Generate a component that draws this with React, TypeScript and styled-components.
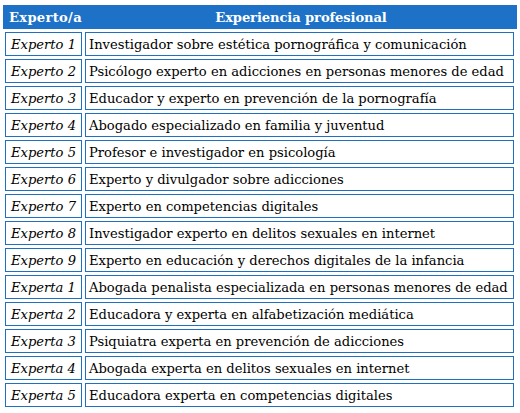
import { Fragment } from "react";
import styled, { createGlobalStyle } from "styled-components";

const GlobalStyle = createGlobalStyle`
  body {
    margin: 0;
    background: #ffffff;
  }
`;

const Page = styled.div`
  padding: 5px 0 0 3px;
  font-family: "DejaVu Serif", "Liberation Serif", serif;
  font-size: 13.1px;
  color: #000000;
`;

const Table = styled.div`
  width: 514px;
`;

const HeadRow = styled.div`
  display: grid;
  grid-template-columns: 82px 432px;
  height: 24px;
  align-items: center;
  background: #1d72c7;
  color: #ffffff;
  font-weight: bold;
`;

const HeadCell = styled.div<{ $center?: boolean }>`
  padding-left: ${(p) => (p.$center ? "0" : "6px")};
  text-align: ${(p) => (p.$center ? "center" : "left")};
  letter-spacing: ${(p) => (p.$center ? "-0.1px" : "0.3px")};
`;

const Body = styled.div`
  display: grid;
  grid-template-columns: 77px 429px;
  grid-auto-rows: 24px;
  gap: 3px;
  padding: 3px 3px 0 2px;
`;

const Cell = styled.div<{ $italic?: boolean }>`
  border: 1px solid #1f6fc3;
  display: flex;
  align-items: center;
  padding-left: ${(p) => (p.$italic ? "5px" : "3px")};
  font-style: ${(p) => (p.$italic ? "italic" : "normal")};
  white-space: nowrap;
`;

const rows: [string, string][] = [
  ["Experto 1", "Investigador sobre estética pornográfica y comunicación"],
  ["Experto 2", "Psicólogo experto en adicciones en personas menores de edad"],
  ["Experto 3", "Educador y experto en prevención de la pornografía"],
  ["Experto 4", "Abogado especializado en familia y juventud"],
  ["Experto 5", "Profesor e investigador en psicología"],
  ["Experto 6", "Experto y divulgador sobre adicciones"],
  ["Experto 7", "Experto en competencias digitales"],
  ["Experto 8", "Investigador experto en delitos sexuales en internet"],
  ["Experto 9", "Experto en educación y derechos digitales de la infancia"],
  ["Experta 1", "Abogada penalista especializada en personas menores de edad"],
  ["Experta 2", "Educadora y experta en alfabetización mediática"],
  ["Experta 3", "Psiquiatra experta en prevención de adicciones"],
  ["Experta 4", "Abogada experta en delitos sexuales en internet"],
  ["Experta 5", "Educadora experta en competencias digitales"],
];

export default function App() {
  return (
    <>
      <GlobalStyle />
      <Page>
        <Table>
          <HeadRow>
            <HeadCell>Experto/a</HeadCell>
            <HeadCell $center>Experiencia profesional</HeadCell>
          </HeadRow>
          <Body>
            {rows.map(([who, what]) => (
              <Fragment key={who}>
                <Cell $italic>{who}</Cell>
                <Cell>{what}</Cell>
              </Fragment>
            ))}
          </Body>
        </Table>
      </Page>
    </>
  );
}
